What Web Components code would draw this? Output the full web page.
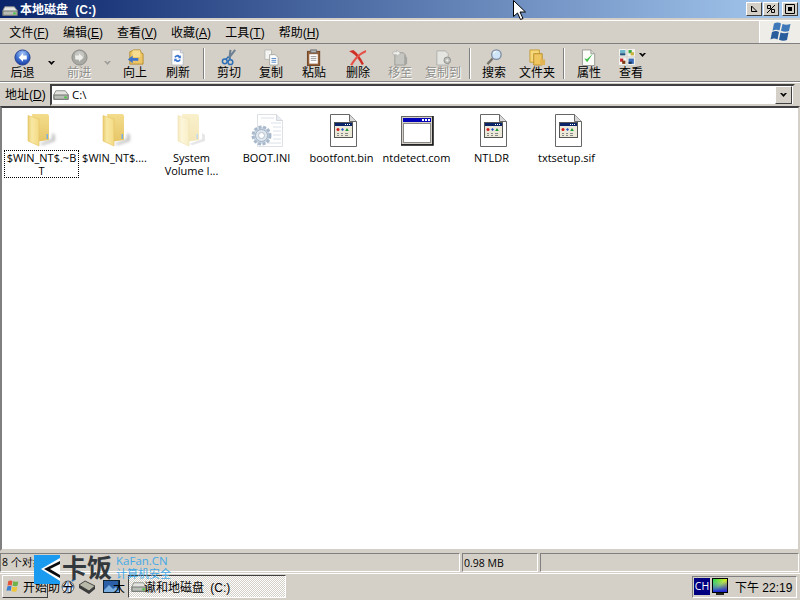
<!DOCTYPE html>
<html lang="zh">
<head>
<meta charset="utf-8">
<title>本地磁盘 (C:)</title>
<style>
  html, body { margin: 0; height: 100%; overflow: hidden; background: #d4d0c8; }
  body { font: 12px "Noto Sans CJK SC", "Liberation Sans", sans-serif; color: #000; }
  xp-desktop { height: 600px; width: 800px; }
</style>
</head>
<body>
<xp-desktop>
  <xp-titlebar>本地磁盘 (C:)</xp-titlebar>
  <xp-menubar></xp-menubar>
  <xp-toolbar></xp-toolbar>
  <xp-address>C:\</xp-address>
  <xp-filelist></xp-filelist>
  <xp-status></xp-status>
  <xp-taskbar></xp-taskbar>
  <xp-watermark></xp-watermark>
  <xp-cursor></xp-cursor>
</xp-desktop>

<script>
const LATIN = '"Open Sans", "Noto Sans", sans-serif';
const CJK = '"Liberation Sans", "Noto Sans CJK SC", sans-serif';

// all the little pictures, keyed by name
const ICONS = {
  drive: `<svg width="17" height="12" viewBox="0 0 18 12"><path d="M3 1.500h10l3 4v5H1v-5z" fill="#e4e4e0" stroke="#8a8f88"/><rect x="1" y="6" width="15" height="4.500" fill="#b9bdb6" stroke="#6d716c"/><rect x="12" y="7.500" width="2.500" height="2" fill="#3fc43a"/></svg>`,
  back: `<svg width="18" height="18" viewBox="0 0 18 18"><defs><radialGradient id="b" cx=".5" cy=".25" r=".8"><stop offset="0" stop-color="#a9c8f6"/><stop offset=".55" stop-color="#3c6fd0"/><stop offset="1" stop-color="#17379a"/></radialGradient></defs><circle cx="9" cy="9" r="8" fill="url(#b)" stroke="#22408f"/><path d="M9.500 4.500 5 9l4.500 4.500V11h4V7h-4z" fill="#fff"/></svg>`,
  forward: `<svg width="18" height="18" viewBox="0 0 18 18"><circle cx="9" cy="9" r="8" fill="#a9a9a4" stroke="#8a8a86"/><circle cx="9" cy="7" r="5" fill="#c6c6c2"/><path d="M8.500 4.500 13 9l-4.500 4.500V11h-4V7h4z" fill="#eeeeea"/></svg>`,
  up: `<svg width="18" height="18" viewBox="0 0 18 18"><path d="M3 16V3l4-2h7l1 3 2 1v11z" fill="#edc767" stroke="#b58b2c"/><path d="M6 1.500h8v7H6z" fill="#f6dc8f"/><path d="M1 11l5-4v2.500h6v3H6V15z" fill="#3e73c9"/></svg>`,
  refresh: `<svg width="16" height="18" viewBox="0 0 16 18"><path d="M2 1h9l3 3v13H2z" fill="#fff" stroke="#b9bcc0"/><path d="M11 1v3h3" fill="#dfe2e6" stroke="#b9bcc0"/><path d="M4.500 8.500a3.500 3.500 0 0 1 6-1l1-1v3.300H8.300l1-1a2 2 0 0 0-3.300.4z" fill="#3a76cf"/><path d="M11.500 11.500a3.500 3.500 0 0 1-6 1l-1 1v-3.300h3.200l-1 1a2 2 0 0 0 3.300-.4z" fill="#3a76cf"/></svg>`,
  cut: `<svg width="18" height="18" viewBox="0 0 18 18"><path d="M15 1 8 10M10 1l-1 9" stroke="#6f7f92" stroke-width="2.200" fill="none"/><circle cx="4" cy="13" r="2.500" fill="none" stroke="#2d6fb5" stroke-width="1.600"/><circle cx="10" cy="14" r="2.500" fill="none" stroke="#2d6fb5" stroke-width="1.600"/><path d="M5 11l3-3M9.500 11.500V9" stroke="#2d6fb5" stroke-width="1.500"/></svg>`,
  copy: `<svg width="18" height="18" viewBox="0 0 18 18"><path d="M2 1h7v10H2z" fill="#f4f4f2" stroke="#b8b8b4"/><path d="M7 6h6l3 3v8H7z" fill="#fff" stroke="#a8a8a4"/><path d="M9 10h5M9 12h5M9 14h5" stroke="#4e83c7"/></svg>`,
  paste: `<svg width="16" height="18" viewBox="0 0 16 18"><rect x="1.500" y="2.500" width="13" height="15" fill="#96623a" stroke="#6d4424"/><rect x="3.500" y="5.500" width="9" height="10" fill="#fff"/><path d="M5 8h6M5 10h6M5 12h6" stroke="#9a9a9a"/><rect x="5" y="1" width="6" height="3" fill="#b4b4b4" stroke="#6c6c6c"/></svg>`,
  del: `<svg width="18" height="16" viewBox="0 0 18 16"><path d="M1 2c5 2 9 7 12 13l2-1C12 8 9 4 5 1z" fill="#cf2f25"/><path d="M17 1C11 3 6 8 2 15l2 .5C8 9 12 5 17 3z" fill="#e4524a"/></svg>`,
  move: `<svg width="18" height="18" viewBox="0 0 18 18"><path d="M5 4h7l2 2v11H3V6z" fill="#c5c5c1" stroke="#9b9b97"/><path d="M13 6l3 3v7l-3 1z" fill="#a5a5a1"/><path d="M1 3h4V1l4 3.500L5 8V6H1z" fill="#eeeeea" stroke="#a8a8a4" stroke-width=".6"/></svg>`,
  copyto: `<svg width="18" height="18" viewBox="0 0 18 18"><path d="M2 2h9l3 3v12H2z" fill="#e4e4e0" stroke="#aeaeaa"/><circle cx="13" cy="12" r="3.500" fill="#bdbdb9" stroke="#8f8f8b"/><path d="M11.500 12h3M13 10.500v3" stroke="#eee"/></svg>`,
  search: `<svg width="18" height="18" viewBox="0 0 18 18"><path d="M7 10 1.500 16" stroke="#77736a" stroke-width="2.400"/><circle cx="11" cy="6" r="5" fill="#cfe4f7" stroke="#7d8ca0" stroke-width="1.400"/><path d="M8 5a3 3 0 0 1 3-2.500" stroke="#fff" fill="none"/></svg>`,
  folders: `<svg width="18" height="18" viewBox="0 0 18 18"><path d="M1 1h10v13H1z" fill="#f6d878" stroke="#c49a35"/><path d="M5 5h9v12H5z" fill="#efc65f" stroke="#b98d2c"/><path d="M12 11h5v6h-5z" fill="#e3b456"/></svg>`,
  props: `<svg width="16" height="18" viewBox="0 0 16 18"><path d="M1.500 1h9l4 4v12.500h-13z" fill="#fbfbf8" stroke="#9a9a94"/><path d="M10.500 1v4h4" fill="#dedfda" stroke="#9a9a94"/><path d="m3.500 10 3 4 6-9-6 5.500z" fill="#3fc048"/></svg>`,
  views: `<svg width="16" height="16" viewBox="0 0 16 16"><rect width="7" height="7" fill="#f2f2ee"/><rect x="1" y="1" width="5" height="3" fill="#69b5c9"/><rect x="1" y="4" width="5" height="2" fill="#27527c"/><rect x="8" width="7" height="7" fill="#f2f2ee"/><rect x="9" y="1" width="3" height="3" fill="#3aa73c"/><rect x="11" y="3" width="3" height="3" fill="#c9b13b"/><rect y="8" width="7" height="7" fill="#f2f2ee"/><rect x="1" y="9" width="3" height="3" fill="#c9262a"/><rect x="3" y="11" width="3" height="3" fill="#7a3a0e"/><rect x="8" y="8" width="7" height="7" fill="#f2f2ee"/><rect x="9" y="9" width="5" height="5" fill="#3a6eb8"/><rect x="9" y="12" width="3" height="2" fill="#1c3358"/></svg>`,
  chev: `<svg width="7" height="4" viewBox="0 0 7 4"><path d="M0 0h2l1.500 1.500L5 0h2L3.500 4z" fill="#000"/></svg>`,
  chevGrey: `<svg width="7" height="4" viewBox="0 0 7 4"><path d="M0 0h2l1.500 1.500L5 0h2L3.500 4z" fill="#9c9c98"/></svg>`,
  flag: `<svg width="24" height="22" viewBox="0 0 24 22"><path d="M6 2.500c3-1.500 5-1 7 0l-1.500 7c-2.500-1-4.500-1-7 .2z" fill="#3f78b8"/><path d="M14.500 3c2.500 1 5 1 8 0l-1.500 7c-2.500 1-5 1-8-.2z" fill="#3f78b8"/><path d="M4 11c3-1.200 5-1.200 7 0L9.500 18.500c-2.500-1.200-4.500-1.200-7 0z" fill="#2a5d9c"/><path d="M12.500 11.500c2.500 1 5 1 8 0L19 19c-2.500 1-5 1-8-.2z" fill="#2a5d9c"/></svg>`,
  xpflag: `<svg width="15" height="15" viewBox="0 0 18 16"><path d="M4 1.500C6 .5 7.500.8 9 1.500L8 7C6.500 6.300 5 6.200 3 7z" fill="#e2553a"/><path d="M10 1.800c2 .8 4 .8 6-.2l-1 5.500c-2 .9-4 .9-6 .1z" fill="#6fb34a"/><path d="M2.800 8c2-.8 3.500-.8 5 0l-1 5.500c-1.500-.8-3-.8-5 0z" fill="#3a7fd0"/><path d="M8.800 8.300c2 .8 4 .8 6-.1l-1 5.500c-2 .9-4 .9-6 .1z" fill="#eec63c"/></svg>`,
  folder: `<svg width="36" height="36" viewBox="3 0 36 36"><defs><filter id="bl" x="-50%" y="-50%" width="200%" height="200%"><feGaussianBlur stdDeviation="1.600"/></filter><linearGradient id="f" x1="0" x2="0" y1="0" y2="1"><stop offset="0" stop-color="#f3dc8c"/><stop offset="1" stop-color="#e6c667"/></linearGradient><linearGradient id="g" x1="0" x2="1"><stop offset="0" stop-color="#e9cc70"/><stop offset=".35" stop-color="#f8e8a4"/><stop offset="1" stop-color="#f3da84"/></linearGradient></defs><path d="M18 32 31 27V21l3 2v6l-12 4z" fill="#8c8c8c" opacity=".55" filter="url(#bl)"/><path d="M11 2h15c1 0 2 1 2 2v24l-14 2z" fill="url(#f)"/><path d="M7 3.500l11 3.500v27L7 29z" fill="url(#g)" stroke="#e5c563" stroke-width=".6"/><rect x="25.500" y="22" width="1.500" height="5" fill="#7fb0dc"/></svg>`,
  folderPale: `<svg width="36" height="36" viewBox="3 0 36 36"><defs><linearGradient id="p" x1="0" x2="0" y1="0" y2="1"><stop offset="0" stop-color="#f9f0cc"/><stop offset="1" stop-color="#f3e6b8"/></linearGradient><linearGradient id="q" x1="0" x2="1"><stop offset="0" stop-color="#f4e8bf"/><stop offset=".35" stop-color="#fcf6da"/><stop offset="1" stop-color="#f8eec6"/></linearGradient></defs><path d="M18 32 31 27V21l3 2v6l-12 4z" fill="#cfcfcf" opacity=".5"/><path d="M11 2h15c1 0 2 1 2 2v24l-14 2z" fill="url(#p)"/><path d="M7 3.500l11 3.500v27L7 29z" fill="url(#q)" stroke="#f0e2b4" stroke-width=".6"/><rect x="25.500" y="22" width="1.500" height="5" fill="#c3d8ec"/></svg>`,
  ini: `<svg width="36" height="36" viewBox="0 0 36 36"><path d="M8.500 2.500h19l6 6v26h-25z" fill="#fff" stroke="#dde1e6"/><path d="M27.500 2.500v6h6" fill="#e8ecf0" stroke="#d2d7dd"/><path d="M12 6h13M22 11h10M24 15h8M24 19h8M24 23h8M24 27h8M18 31h14" stroke="#dbe1e8"/><circle cx="12.500" cy="23.500" r="8.500" fill="#cfdbe7" stroke="#a9b9cb" stroke-width="3" stroke-dasharray="3 1.600"/><circle cx="12.500" cy="23.500" r="6" fill="#dfe7ef" stroke="#a1b1c4"/><circle cx="12.500" cy="23.500" r="3" fill="#fff" stroke="#b4c1d0"/></svg>`,
  app: `<svg width="36" height="36" viewBox="0 0 36 36"><path d="M6.500 2.500h19l7 7v25h-26z" fill="#fff" stroke="#666"/><path d="M25.500 2.500v7h7" fill="#d8d8d8" stroke="#666"/><rect x="10.500" y="10.500" width="18" height="15" fill="#ece9d8" stroke="#555"/><rect x="11" y="11" width="17" height="3" fill="#0a246a"/><rect x="23" y="12" width="1" height="1" fill="#fff"/><rect x="25" y="12" width="1" height="1" fill="#fff"/><rect x="21" y="12" width="1" height="1" fill="#fff"/><circle cx="14" cy="17.500" r="1.500" fill="#d11a1a"/><path d="M18.500 16l1.500 1.500-1.500 1.500-1.500-1.500z" fill="#1e4fc7"/><path d="M23 16l1.800 3h-3.600z" fill="#1a9a33"/><path d="M13 21.500h2M17 21.500h2M21 21.500h3M13 23.500h2M17 23.500h2M21 23.500h3" stroke="#888"/></svg>`,
  win: `<svg width="36" height="36" viewBox="0 0 36 36"><rect x="2.500" y="4.500" width="31" height="28" fill="#d4d0c8" stroke="#666"/><path d="M34 4v29H2" fill="none" stroke="#111" stroke-width="1.500"/><rect x="4" y="6" width="28" height="4" fill="#0000b8"/><rect x="26" y="7" width="2" height="2" fill="#fff"/><rect x="23" y="7" width="2" height="2" fill="#fff"/><rect x="29" y="7" width="2" height="2" fill="#fff"/><rect x="4.500" y="11.500" width="27" height="19" fill="#fff" stroke="#888"/></svg>`,
  monitor: `<svg width="16" height="18" viewBox="0 0 16 18"><defs><linearGradient id="r1" x1="0" x2="1" y1="0" y2="1"><stop offset="0" stop-color="#1fd44a"/><stop offset=".5" stop-color="#e8f01a"/><stop offset="1" stop-color="#e8181a"/></linearGradient><linearGradient id="r2" x1="0" x2="0" y1="0" y2="1"><stop offset="0" stop-color="#00d8ff" stop-opacity="0"/><stop offset="1" stop-color="#1a20d8"/></linearGradient></defs><rect width="16" height="15" fill="#000"/><rect x="1" y="1" width="14" height="13" fill="url(#r1)"/><rect x="1" y="1" width="14" height="13" fill="url(#r2)"/><rect x="4" y="15" width="8" height="2" fill="#222"/></svg>`,
  quick1: `<svg width="18" height="16" viewBox="0 0 18 16"><circle cx="9" cy="8" r="6" fill="#eee" stroke="#666"/><path d="M9 2v12M3 8h12" stroke="#3a76cf"/><path d="M13 2l3-2" stroke="#2d6fb5" stroke-width="2"/></svg>`,
  quick2: `<svg width="18" height="16" viewBox="0 0 18 16"><path d="M1 6l6-4 10 5-6 5z" fill="#b9b9a9" stroke="#444"/><path d="M1 6v3l10 6v-3zM11 12v3l6-5V7z" fill="#3c3c3c"/></svg>`,
  quick3: `<svg width="18" height="14" viewBox="0 0 18 14"><rect x=".5" y=".5" width="16" height="12" fill="#2b5fa8" stroke="#123"/><path d="M1 10 6 5l4 4 3-2 3 4v1H1z" fill="#7aaee0"/></svg>`
};

// small helper so every component does the same dance
function shadow(el, html) {
  el.attachShadow({ mode: 'open' }).innerHTML = html;
  return el.shadowRoot;
}

class XpDesktop extends HTMLElement {
  constructor() {
    super();
    shadow(this, `<style>
      :host { display: flex; flex-direction: column; position: relative; background: #d4d0c8; overflow: hidden; }
    </style><slot></slot>`);
  }
}

class XpTitlebar extends HTMLElement {
  constructor() {
    super();
    shadow(this, `<style>
      :host { display: flex; align-items: center; height: 18px; flex: none; color: #fff; padding: 0 2px 0 2px; box-sizing: border-box;
        background: linear-gradient(90deg, #0a246a, #a6caf0); font: bold 12px ${CJK}; word-spacing: 4px; }
      .i { display: flex; margin-right: 1px; padding-top: 4px; }
      .t { flex: 1; padding-bottom: 1px; }
      .b { display: flex; }
      .c { width: 16px; height: 14px; box-sizing: border-box; background: #d4d0c8; display: flex; align-items: center; justify-content: center;
        border: 1px solid; border-color: #fff #404040 #404040 #fff; }
      .c + .c { margin-left: 1px; }
      .c:last-child { margin-left: 3px; }
    </style>
    <span class="i">${ICONS.drive}</span><span class="t"><slot></slot></span>
    <span class="b">
      <span class="c"><svg width="8" height="8"><path d="M1.500 1v5.500H7M1.500 1 7 6.500" stroke="#000" fill="none"/></svg></span>
      <span class="c"><svg width="10" height="10"><path d="M1 9 9 1M1.500 1.500h3v3h-3zM5.500 5.500h3v3h-3z" stroke="#000" fill="none"/></svg></span>
      <span class="c"><svg width="10" height="10"><path d="M.5.500h9v9h-9z" stroke="#000" fill="none"/><rect x="3" y="3" width="4" height="4"/></svg></span>
    </span>`);
  }
}

class XpMenubar extends HTMLElement {
  constructor() {
    super();
    const items = [['文件','F'],['编辑','E'],['查看','V'],['收藏','A'],['工具','T'],['帮助','H']];
    shadow(this, `<style>
      :host { display: flex; height: 22px; flex: none; margin-top: 2px; align-items: center; padding-left: 2px; font: 12px ${CJK};
        border-top: 1px solid #fff; border-bottom: 1px solid #808080; }
      .m { width: 54px; text-align: center; white-space: nowrap; margin-top: -2px; }
      .s { flex: 1; }
      .flag { width: 40px; height: 22px; background: #efede7; border-left: 1px solid #fff; display: flex; align-items: center; justify-content: center; }
    </style>
    ${items.map(([t, k]) => `<span class="m">${t}(<u>${k}</u>)</span>`).join('')}
    <span class="s"></span><span class="flag">${ICONS.flag}</span>`);
  }
}

class XpToolBtn extends HTMLElement {
  connectedCallback() {
    if (this.shadowRoot) return;
    const off = this.hasAttribute('off');
    shadow(this, `<style>
      :host { display: flex; flex-direction: column; align-items: center; width: ${this.getAttribute('w') || 42}px; flex: none; }
      .i { height: 18px; display: flex; align-items: center; margin-right: ${this.getAttribute('shift') || 0}px; }
      .i svg { height: 17px; width: auto; }
      .l { font: 12px/14px ${CJK}; white-space: nowrap; ${off ? 'color: #8f8f8a; text-shadow: 1px 1px 0 #fff;' : ''} }
    </style>
    <span class="i">${ICONS[this.getAttribute('icon')]}</span>
    <span class="l">${this.getAttribute('label')}</span>`);
  }
}

class XpToolbar extends HTMLElement {
  constructor() {
    super();
    shadow(this, `<style>
      :host { display: flex; height: 37px; flex: none; align-items: flex-start; padding: 3px 0 0 1px; box-sizing: border-box; margin-top: 1px;
        border-bottom: 1px solid #808080; }
      .sep { width: 1px; height: 31px; background: #808080; border-right: 1px solid #fff; flex: none; margin: 0 3px 0 4px; }
      .arrow { width: 14px; flex: none; display: flex; justify-content: center; padding-top: 13px; }
      .a2 { display: flex; padding-top: 5px; margin-left: -13px; }
    </style>
    <xp-tool-btn label="后退" icon="back" w="43"></xp-tool-btn>
    <span class="arrow">${ICONS.chev}</span>
    <xp-tool-btn label="前进" icon="forward" off></xp-tool-btn>
    <span class="arrow">${ICONS.chevGrey}</span>
    <xp-tool-btn label="向上" icon="up"></xp-tool-btn>
    <xp-tool-btn label="刷新" icon="refresh" style="margin-left:1px"></xp-tool-btn>
    <span class="sep"></span>
    <xp-tool-btn label="剪切" icon="cut"></xp-tool-btn>
    <xp-tool-btn label="复制" icon="copy"></xp-tool-btn>
    <xp-tool-btn label="粘贴" icon="paste" style="margin-left:1px"></xp-tool-btn>
    <xp-tool-btn label="删除" icon="del" style="margin-left:2px"></xp-tool-btn>
    <xp-tool-btn label="移至" icon="move" off></xp-tool-btn>
    <xp-tool-btn label="复制到" icon="copyto" off w="44"></xp-tool-btn>
    <span class="sep"></span>
    <xp-tool-btn label="搜索" icon="search" w="40"></xp-tool-btn>
    <xp-tool-btn label="文件夹" icon="folders" w="44" style="margin-left:1px"></xp-tool-btn>
    <span class="sep"></span>
    <xp-tool-btn label="属性" icon="props"></xp-tool-btn>
    <xp-tool-btn label="查看" icon="views" shift="8"></xp-tool-btn>
    <span class="a2">${ICONS.chev}</span>`);
  }
}

class XpAddress extends HTMLElement {
  constructor() {
    super();
    shadow(this, `<style>
      :host { display: flex; height: 23px; flex: none; align-items: center; padding: 0 5px 0 5px; border-top: 1px solid #fff; font: 12px ${CJK}; }
      .lab { width: 45px; flex: none; margin-top: -3px; }
      .f { flex: 1; height: 22px; box-sizing: border-box; background: #fff; display: flex; align-items: center;
        border: 2px solid; border-color: #404040 #d4d0c8 #d4d0c8 #404040; padding: 0 1px 0 1px; font: 11.500px ${LATIN}; }
      .d { display: flex; margin-right: 2px; }
      .t { flex: 1; margin-top: -1px; }
      .dd { width: 17px; height: 18px; box-sizing: border-box; background: #d4d0c8; display: flex; align-items: center; justify-content: center;
        border: 1px solid; border-color: #fff #404040 #404040 #fff; }
    </style>
    <span class="lab">地址(<u>D</u>)</span>
    <span class="f"><span class="d">${ICONS.drive}</span><span class="t"><slot></slot></span><span class="dd">${ICONS.chev}</span></span>`);
  }
}

class XpFile extends HTMLElement {
  connectedCallback() {
    if (this.shadowRoot) return;
    const sel = this.hasAttribute('selected');
    shadow(this, `<style>
      :host { display: flex; flex-direction: column; align-items: center; width: 75px; flex: none; }
      .i { height: 36px; display: flex; }
      .n { width: 75px; margin-top: 2px; text-align: center; font: 11px/13px ${LATIN}; color: #000; word-break: break-all; box-sizing: border-box; padding: 1px 1px 1px;
        padding-right: ${this.getAttribute('pr') || 1}px;
        ${sel ? 'outline: 1px dotted #000; outline-offset: -1px;' : ''} }
    </style>
    <span class="i">${ICONS[this.getAttribute('icon')]}</span>
    <span class="n"><slot></slot></span>`);
  }
}

class XpFilelist extends HTMLElement {
  constructor() {
    super();
    const files = [
      ['folder', '$WIN_NT$.~B<br>T', 'selected'], ['folder', '$WIN_NT$....', 'pr="5"'], ['folderPale', 'System<br>Volume I...'],
      ['ini', 'BOOT.INI'], ['app', 'bootfont.bin'], ['win', 'ntdetect.com'], ['app', 'NTLDR'], ['app', 'txtsetup.sif']
    ];
    shadow(this, `<style>
      :host { display: block; flex: 1; background: #fff; border: 2px solid; border-color: #404040 #d4d0c8 #d4d0c8 #808080; box-sizing: border-box; min-height: 0; }
      .g { display: flex; padding: 4px 0 0 2px; }
    </style><div class="g">
    ${files.map(([ic, n, s]) => `<xp-file icon="${ic}" ${s || ''}>${n}</xp-file>`).join('')}
    </div>`);
  }
}

class XpStatus extends HTMLElement {
  constructor() {
    super();
    shadow(this, `<style>
      :host { display: flex; height: 22px; flex: none; gap: 2px; padding-right: 1px; box-sizing: border-box; font: 10.500px ${LATIN}; }
      .p { box-sizing: border-box; height: 19px; margin-top: 2px; border: 1px solid; border-color: #808080 #fff #fff #808080; display: flex; align-items: center; padding-left: 1px; }
    </style>
    <span class="p" style="width:460px"><span style="font:12px ${CJK}">8 个对象</span></span>
    <span class="p" style="width:76px">0.98 MB</span>
    <span class="p" style="flex:1"></span>`);
  }
}

class XpTaskbar extends HTMLElement {
  constructor() {
    super();
    shadow(this, `<style>
      :host { display: flex; height: 27px; flex: none; align-items: center; box-sizing: border-box; padding: 1px 3px 2px 2px; border-top: 1px solid #fff; font: 12px ${CJK}; }
      .start { height: 23px; width: 46px; box-sizing: border-box; display: flex; align-items: center; gap: 3px; padding-left: 2px; white-space: nowrap;
        border: 1px solid; border-color: #fff #404040 #404040 #fff; flex: none; overflow: hidden; }
      .q { display: flex; align-items: center; flex: none; width: 80px; box-sizing: border-box; white-space: nowrap; }
      .task { height: 23px; width: 158px; box-sizing: border-box; flex: none; display: flex; align-items: center; gap: 0; padding-left: 2px; white-space: nowrap; word-spacing: 3px;
        border: 1px solid; border-color: #404040 #fff #fff #404040; background: #ece9e2 repeating-conic-gradient(#fff 0 25%, #d4d0c8 0 50%) 0 0 / 2px 2px; }
      .s { flex: 1; }
      .tray { height: 22px; width: 105px; box-sizing: border-box; flex: none; display: flex; align-items: center; padding-left: 1px; gap: 2px;
        border: 1px solid; border-color: #808080 #fff #fff #808080; }
      .ch { width: 16px; height: 17px; background: #000080; color: #fff; font: 10.500px/17px ${LATIN}; text-align: center; }
      .clk { margin-left: 5px; white-space: nowrap; }
    </style>
    <span class="start">${ICONS.xpflag}<span>开始</span></span>
    <span class="q"><span>助</span><span style="display:flex;margin-left:-1px">${ICONS.quick1}</span><span style="margin-left:-15px">分</span><span style="display:flex;margin-left:4px">${ICONS.quick2}</span><span style="display:flex;margin-left:7px">${ICONS.quick3}</span><span style="margin-left:-8px">大</span></span>
    <span class="task">${ICONS.drive}<span style="margin-left:-4px">谳和地磁盘 (C:)</span></span>
    <span class="s"></span>
    <span class="tray"><span class="ch">CH</span>${ICONS.monitor}<span class="clk">下午 22:19</span></span>`);
  }
}

class XpWatermark extends HTMLElement {
  constructor() {
    super();
    shadow(this, `<style>
      :host { position: absolute; left: 34px; top: 555px; display: flex; align-items: flex-start; }
      .k { display: flex; flex: none; }
      .big { font: bold 25px/25px "Noto Sans CJK SC", sans-serif; color: #33383c; margin: -1px 4px 0 2px; white-space: nowrap; }
      .side { color: #44a8e6; white-space: nowrap; margin-top: -1px; }
      .a { font: 11.500px/13px ${LATIN}; }
      .b { font: 11px/13px "Noto Sans CJK SC", sans-serif; }
    </style>
    <span class="k"><svg width="26" height="29" viewBox="0 0 26 29"><rect width="26" height="29" fill="#1b9bf0"/><path d="M26 3 7 14l19 12z" fill="#fff"/><path d="M26 6 10 14l16 9v-3L16 14l10-5z" fill="#0c0c10"/></svg></span>
    <span class="big">卡饭</span>
    <span class="side"><div class="a">KaFan.CN</div><div class="b">计算机安全</div></span>`);
  }
}

class XpCursor extends HTMLElement {
  constructor() {
    super();
    shadow(this, `<style>:host { position: absolute; left: 513px; top: 0; line-height: 0; }</style>
    <svg width="13" height="21" viewBox="0 0 13 21"><path d="M.5.500v16l4-3.500 3 6.500 2.500-1-3-6.500h5.500z" fill="#fff" stroke="#000"/></svg>`);
  }
}

customElements.define('xp-desktop', XpDesktop);
customElements.define('xp-titlebar', XpTitlebar);
customElements.define('xp-menubar', XpMenubar);
customElements.define('xp-tool-btn', XpToolBtn);
customElements.define('xp-toolbar', XpToolbar);
customElements.define('xp-address', XpAddress);
customElements.define('xp-file', XpFile);
customElements.define('xp-filelist', XpFilelist);
customElements.define('xp-status', XpStatus);
customElements.define('xp-taskbar', XpTaskbar);
customElements.define('xp-watermark', XpWatermark);
customElements.define('xp-cursor', XpCursor);
</script>
</body>
</html>
